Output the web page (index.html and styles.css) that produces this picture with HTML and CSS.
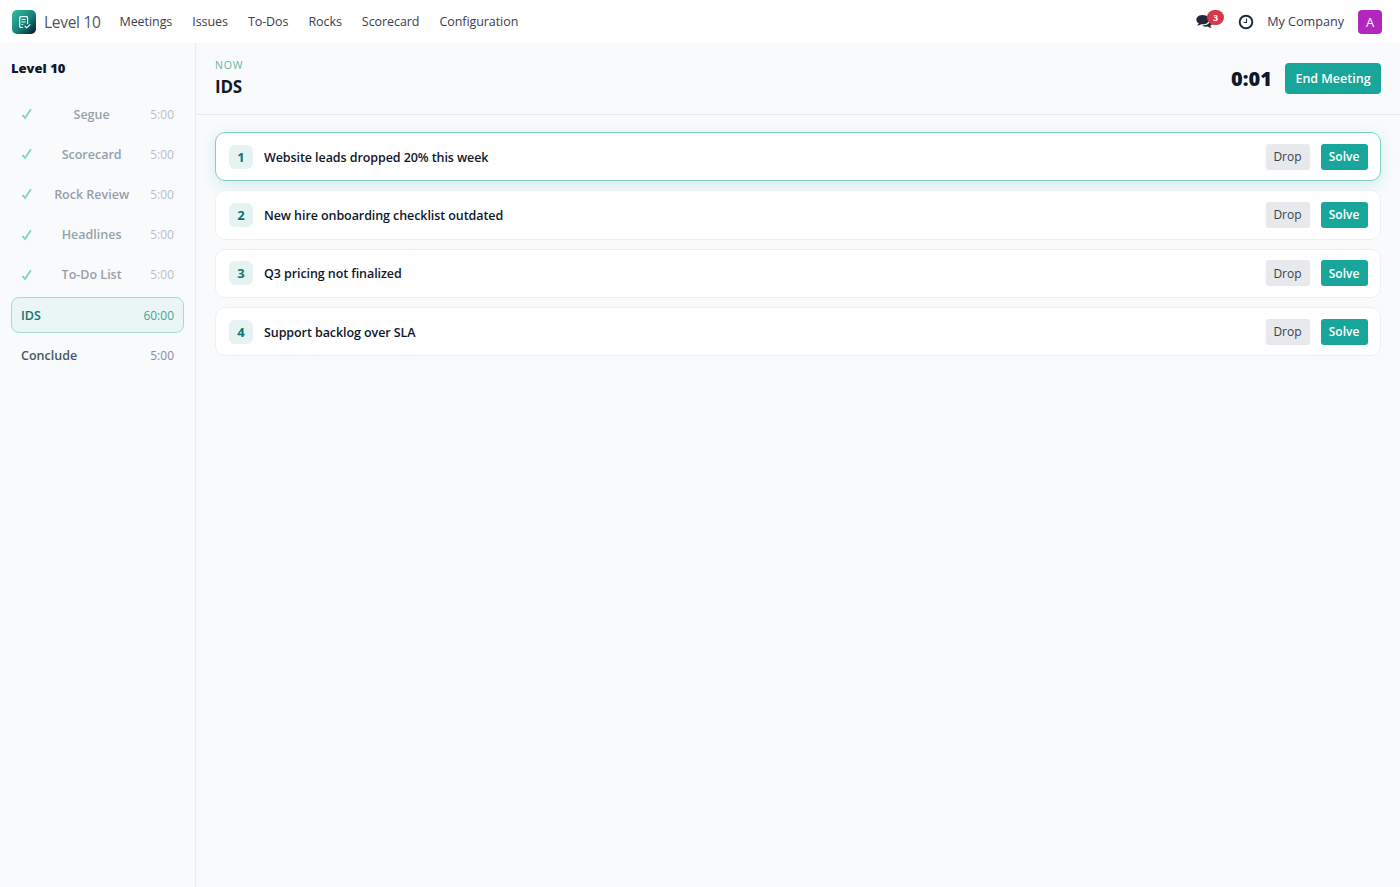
FILE: index.html
```html
<!DOCTYPE html>
<html lang="en">
<head>
  <meta charset="UTF-8">
  <title>Level 10 - IDS</title>
  <link rel="stylesheet" href="styles.css">
</head>
<body>
  <header class="navbar">
    <svg class="logo" viewBox="0 0 24 24">
      <defs>
        <linearGradient id="logoBg" x1="0" y1="0" x2="1" y2="1">
          <stop offset="0" stop-color="#35bfa5"/>
          <stop offset="0.55" stop-color="#17807a"/>
          <stop offset="1" stop-color="#07162f"/>
        </linearGradient>
      </defs>
      <rect width="24" height="24" rx="5" fill="url(#logoBg)"/>
      <g fill="none" stroke="#e6fffa" stroke-width="1.2" stroke-linecap="round" stroke-linejoin="round">
        <path d="M10.500 17.500H8.700a1 1 0 0 1-1-1V7.700a1 1 0 0 1 1-1h5.900a1 1 0 0 1 1 1v5.800"/>
        <path d="M10 9.500h3.200M10 12h3.200M10 14.500h.8" stroke-width="1"/>
        <path d="M13 16.300l1.700 1.500 3.200-3.200"/>
      </g>
    </svg>
    <span class="brand">Level 10</span>
    <nav class="menu">
      <a>Meetings</a>
      <a>Issues</a>
      <a>To-Dos</a>
      <a>Rocks</a>
      <a>Scorecard</a>
      <a>Configuration</a>
    </nav>
    <div class="systray">
      <div class="messages">
        <svg width="17" height="14" viewBox="0 0 1792 1536">
          <path fill="#1f2937" d="M1408 640q0 139-94 257t-256.500 186.500-353.500 68.500q-86 0-176-16-124 88-278 128-36 9-86 16h-3q-11 0-20.500-8t-11.500-21q-1-3-1-6.500t.5-6.500 2-6l2.500-5 3.500-5.500 4-5 4.500-5 4-4.500q5-6 23-25t26-29.500 22.500-29 25-38.500 20.500-44q-124-72-195-177t-71-224q0-139 94-257t256.500-186.500 353.500-68.500 353.500 68.500 256.500 186.500 94 257zm384 256q0 120-71 224.500t-195 176.500q10 24 20.500 44t25 38.500 22.500 29 26 29.500 23 25q1 1 4 4.500t4.500 5 4 5 3.500 5.500l2.500 5 2 6 .5 6.500-1 6.500q-3 14-13 22t-22 7q-50-7-86-16-154-40-278-128-90 16-176 16-271 0-472-132 58 4 88 4 161 0 309-45t264-129q125-92 192-212t67-254q0-77-23-152 129 71 204 178t75 230z" transform="translate(0 -128)"/>
        </svg>
        <span class="badge">3</span>
      </div>
      <svg class="clock" width="16" height="16" viewBox="0 0 16 16" fill="none" stroke="#1f2937">
        <circle cx="8" cy="8" r="6.300" stroke-width="1.900"/>
        <path d="M8.500 4.500v4H5.700" stroke-width="1.100"/>
      </svg>
      <span class="company">My Company</span>
      <span class="avatar">A</span>
    </div>
  </header>

  <div class="meeting">
    <aside class="sidebar">
      <h2>Level 10</h2>
      <div class="agenda">
        <div class="step done"><svg class="check" viewBox="0 0 12 12"><path d="M1.500 7L4 10 9.900 1.300"/></svg><span>Segue</span><time>5:00</time></div>
        <div class="step done"><svg class="check" viewBox="0 0 12 12"><path d="M1.500 7L4 10 9.900 1.300"/></svg><span>Scorecard</span><time>5:00</time></div>
        <div class="step done"><svg class="check" viewBox="0 0 12 12"><path d="M1.500 7L4 10 9.900 1.300"/></svg><span>Rock Review</span><time>5:00</time></div>
        <div class="step done"><svg class="check" viewBox="0 0 12 12"><path d="M1.500 7L4 10 9.900 1.300"/></svg><span>Headlines</span><time>5:00</time></div>
        <div class="step done"><svg class="check" viewBox="0 0 12 12"><path d="M1.500 7L4 10 9.900 1.300"/></svg><span>To-Do List</span><time>5:00</time></div>
        <div class="step active"><span>IDS</span><time>60:00</time></div>
        <div class="step"><span>Conclude</span><time>5:00</time></div>
      </div>
    </aside>

    <main class="stage">
      <div class="stage-header">
        <div>
          <div class="eyebrow">NOW</div>
          <h1>IDS</h1>
        </div>
        <div class="timer">0:01</div>
        <button class="btn-end">End Meeting</button>
      </div>
      <div class="issues">
        <div class="issue current">
          <span class="rank">1</span>
          <span class="name">Website leads dropped 20% this week</span>
          <button class="btn drop">Drop</button>
          <button class="btn solve">Solve</button>
        </div>
        <div class="issue">
          <span class="rank">2</span>
          <span class="name">New hire onboarding checklist outdated</span>
          <button class="btn drop">Drop</button>
          <button class="btn solve">Solve</button>
        </div>
        <div class="issue">
          <span class="rank">3</span>
          <span class="name">Q3 pricing not finalized</span>
          <button class="btn drop">Drop</button>
          <button class="btn solve">Solve</button>
        </div>
        <div class="issue">
          <span class="rank">4</span>
          <span class="name">Support backlog over SLA</span>
          <button class="btn drop">Drop</button>
          <button class="btn solve">Solve</button>
        </div>
      </div>
    </main>
  </div>
</body>
</html>
```
FILE: styles.css
```css
* {
  box-sizing: border-box;
}

body {
  margin: 0;
  height: 100vh;
  display: flex;
  flex-direction: column;
  background: #f8fafc;
  color: #0f172a;
  font-family: 'Open Sans', 'Noto Sans', sans-serif;
  font-size: 13px;
  overflow: hidden;
}

button {
  font-family: inherit;
  border: 0;
  padding: 0;
}

/* top bar */
.navbar {
  height: 43px;
  flex: none;
  display: flex;
  align-items: center;
  padding: 0 18px 0 12px;
  background: #fff;
  color: #374151;
}

.logo {
  width: 24px;
  height: 24px;
}

.brand {
  width: 57px;
  margin-left: 8px;
  font-size: 15.500px;
  letter-spacing: -0.3px;
  color: #4b5563;
  white-space: nowrap;
}

.menu {
  display: flex;
  gap: 20px;
  margin-left: 18.500px;
  font-size: 12.500px;
  letter-spacing: -0.07px;
}

.systray {
  display: flex;
  align-items: center;
  margin-left: auto;
}

.messages {
  position: relative;
  width: 28px;
  height: 14px;
}

.messages svg {
  display: block;
}

.badge {
  position: absolute;
  top: -5px;
  left: 11px;
  width: 17px;
  height: 15px;
  border-radius: 8px;
  background: #dc3545;
  color: #fff;
  font-size: 9px;
  font-weight: 700;
  line-height: 15px;
  text-align: center;
}

.clock {
  margin-left: 14px;
}

.company {
  margin-left: 13px;
  font-size: 12.600px;
}

.avatar {
  width: 24px;
  height: 24px;
  margin-left: 14px;
  border-radius: 4px;
  background: #b326bd;
  color: #fff;
  line-height: 24px;
  text-align: center;
}

.meeting {
  flex: 1;
  display: flex;
}

/* agenda */
.sidebar {
  width: 196px;
  flex: none;
  padding: 15px 11px;
  border-right: 1px solid #e9edf1;
}

.sidebar h2 {
  margin: 0 0 18px;
  font-size: 13px;
  font-weight: 800;
  line-height: 20px;
}

.agenda {
  display: flex;
  flex-direction: column;
  gap: 4px;
}

.step {
  height: 36.200px;
  display: flex;
  align-items: center;
  justify-content: space-between;
  padding: 0 9px;
  border: 1px solid transparent;
  border-radius: 8px;
  font-size: 12.500px;
  font-weight: 600;
  color: #475569;
}

.step time {
  font-size: 12px;
  font-weight: 400;
  color: #8590a0;
}

.step.done {
  opacity: 0.55;
}

.step.active {
  background: #e9f6f5;
  border-color: #a5dccf;
  color: #0f766e;
}

.step.active time {
  color: #4d9f95;
}

.check {
  width: 12px;
  height: 12px;
  fill: none;
  stroke: #14b895;
  stroke-width: 1.800;
}

/* current section */
.stage {
  flex: 1;
}

.stage-header {
  height: 72px;
  display: flex;
  align-items: center;
  padding: 0 19px;
  border-bottom: 1px solid #e6eaee;
}

.eyebrow {
  font-size: 10.500px;
  line-height: 14px;
  letter-spacing: 0.8px;
  color: #6bb5a8;
}

h1 {
  margin: 3px 0 0;
  font-size: 17px;
  font-weight: 700;
  line-height: 24px;
  letter-spacing: -0.2px;
}

.timer {
  margin-left: auto;
  font-size: 20px;
  font-weight: 800;
}

.btn-end {
  width: 96px;
  height: 31px;
  margin: -1px 0 0 13px;
  border-radius: 4px;
  background: #17a699;
  color: #fff;
  font-size: 12.500px;
  font-weight: 600;
}

.issues {
  display: flex;
  flex-direction: column;
  gap: 9px;
  padding: 17px 19px;
}

.issue {
  height: 49.300px;
  display: flex;
  align-items: center;
  padding: 0 12.500px 0 13px;
  background: #fff;
  border: 1px solid #edf0f3;
  border-radius: 10px;
}

.issue.current {
  border-color: #7fcfc2;
  box-shadow: 0 4px 14px rgba(20, 166, 150, 0.16);
}

.rank {
  width: 24px;
  height: 24px;
  border-radius: 6px;
  background: #e5f4f2;
  color: #0f766e;
  font-weight: 700;
  line-height: 24px;
  text-align: center;
}

.name {
  flex: 1;
  margin-left: 11px;
  padding-top: 1px;
  font-size: 12.500px;
  font-weight: 600;
  letter-spacing: -0.08px;
}

.btn {
  height: 26px;
  border-radius: 3px;
  font-size: 12px;
  font-weight: 600;
}

.drop {
  width: 44px;
  background: #e7e9ed;
  color: #374151;
  font-weight: 500;
}

.solve {
  width: 47px;
  margin-left: 11px;
  background: #17a699;
  color: #fff;
}
```
